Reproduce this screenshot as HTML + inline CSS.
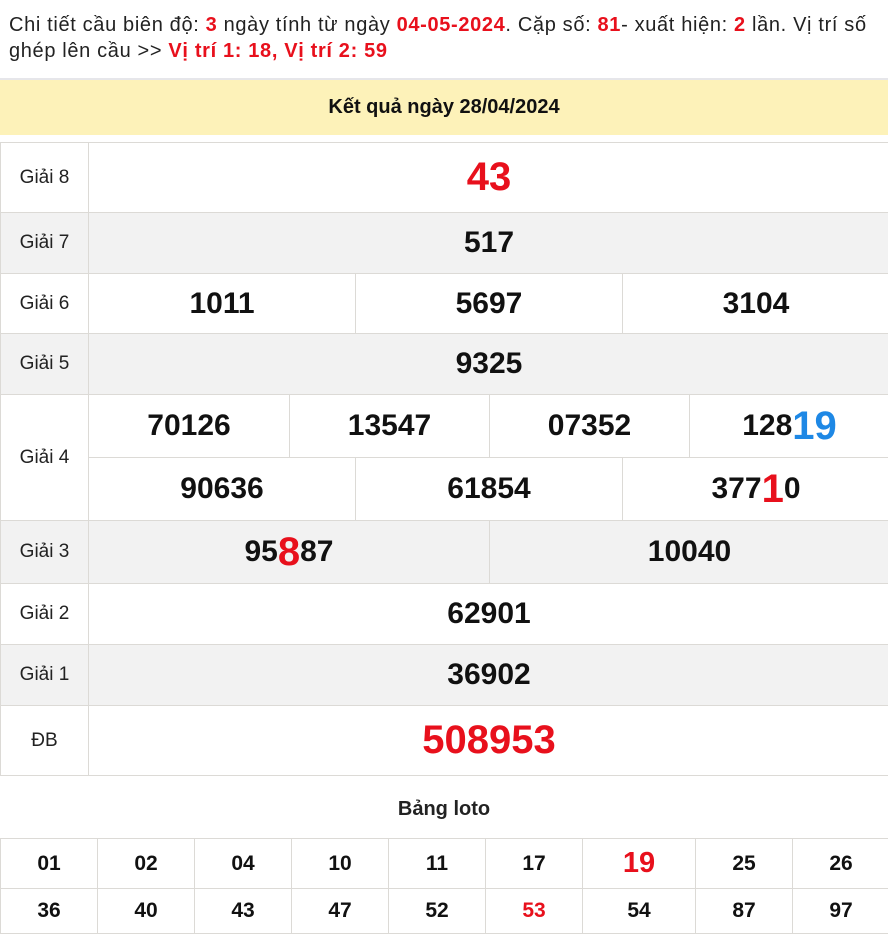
<!DOCTYPE html>
<html><head><meta charset="utf-8"><style>
*{margin:0;padding:0;box-sizing:border-box}
body{width:888px;height:935px;background:#fff;font-family:"Liberation Sans",Arial,sans-serif;position:relative;overflow:hidden;color:#111}
.top{position:absolute;left:9px;top:12px;width:880px;font-size:20px;letter-spacing:0.65px;line-height:26px;color:#222;white-space:nowrap}
.r{color:#e8101c;font-weight:bold}
.hd{position:absolute;left:0;top:78px;width:888px;height:57px;background:#fdf2b9;border-top:2px solid #e6e6ea;text-align:center;font-weight:bold;font-size:20px;line-height:55px}
.c{position:absolute;border:1px solid #dcdad6;display:flex;align-items:center;justify-content:center;font-weight:bold;font-size:30px}
.l{font-weight:normal;font-size:19px;color:#222}
.g{background:#f2f2f2}
.red{color:#e8101c}.blue{color:#1e88e5}
.big{font-size:40px}
.lt{position:absolute;border:1px solid #dcdad6;display:flex;align-items:center;justify-content:center;font-weight:bold;font-size:21px}
</style></head><body>
<div class="top">Chi tiết cầu biên độ: <span class="r">3</span> ngày tính từ ngày <span class="r">04-05-2024</span>. Cặp số: <span class="r">81</span>- xuất hiện: <span class="r">2</span> lần. Vị trí số<br>ghép lên cầu &gt;&gt; <span class="r">Vị trí 1: 18, Vị trí 2: 59</span></div>
<div class="hd">Kết quả ngày 28/04/2024</div>

<div class="c l" style="left:0;top:142px;width:89px;height:71px">Giải 8</div>
<div class="c red big" style="left:88px;top:142px;width:802px;height:71px">43</div>

<div class="c l g" style="left:0;top:212px;width:89px;height:62px">Giải 7</div>
<div class="c g" style="left:88px;top:212px;width:802px;height:62px">517</div>

<div class="c l" style="left:0;top:273px;width:89px;height:61px">Giải 6</div>
<div class="c" style="left:88px;top:273px;width:268px;height:61px">1011</div>
<div class="c" style="left:355px;top:273px;width:268px;height:61px">5697</div>
<div class="c" style="left:622px;top:273px;width:268px;height:61px">3104</div>

<div class="c l g" style="left:0;top:333px;width:89px;height:62px">Giải 5</div>
<div class="c g" style="left:88px;top:333px;width:802px;height:62px">9325</div>

<div class="c l" style="left:0;top:394px;width:89px;height:127px">Giải 4</div>
<div class="c" style="left:88px;top:394px;width:202px;height:64px">70126</div>
<div class="c" style="left:289px;top:394px;width:201px;height:64px">13547</div>
<div class="c" style="left:489px;top:394px;width:201px;height:64px">07352</div>
<div class="c" style="left:689px;top:394px;width:201px;height:64px">128<span class="blue big">19</span></div>
<div class="c" style="left:88px;top:457px;width:268px;height:64px">90636</div>
<div class="c" style="left:355px;top:457px;width:268px;height:64px">61854</div>
<div class="c" style="left:622px;top:457px;width:268px;height:64px">377<span class="red big">1</span>0</div>

<div class="c l g" style="left:0;top:520px;width:89px;height:64px">Giải 3</div>
<div class="c g" style="left:88px;top:520px;width:402px;height:64px">95<span class="red big">8</span>87</div>
<div class="c g" style="left:489px;top:520px;width:401px;height:64px">10040</div>

<div class="c l" style="left:0;top:583px;width:89px;height:62px">Giải 2</div>
<div class="c" style="left:88px;top:583px;width:802px;height:62px">62901</div>

<div class="c l g" style="left:0;top:644px;width:89px;height:62px">Giải 1</div>
<div class="c g" style="left:88px;top:644px;width:802px;height:62px">36902</div>

<div class="c l" style="left:0;top:705px;width:89px;height:71px">ĐB</div>
<div class="c red big" style="left:88px;top:705px;width:802px;height:71px">508953</div>

<div style="position:absolute;left:0;top:798px;width:888px;text-align:center;font-weight:bold;font-size:20px;color:#222">Bảng loto</div>

<div class="lt" style="left:0;top:838px;width:98px;height:51px">01</div>
<div class="lt" style="left:97px;top:838px;width:98px;height:51px">02</div>
<div class="lt" style="left:194px;top:838px;width:98px;height:51px">04</div>
<div class="lt" style="left:291px;top:838px;width:98px;height:51px">10</div>
<div class="lt" style="left:388px;top:838px;width:98px;height:51px">11</div>
<div class="lt" style="left:485px;top:838px;width:98px;height:51px">17</div>
<div class="lt red" style="left:582px;top:838px;width:114px;height:51px;font-size:29px">19</div>
<div class="lt" style="left:695px;top:838px;width:98px;height:51px">25</div>
<div class="lt" style="left:792px;top:838px;width:98px;height:51px">26</div>
<div class="lt" style="left:0;top:888px;width:98px;height:46px">36</div>
<div class="lt" style="left:97px;top:888px;width:98px;height:46px">40</div>
<div class="lt" style="left:194px;top:888px;width:98px;height:46px">43</div>
<div class="lt" style="left:291px;top:888px;width:98px;height:46px">47</div>
<div class="lt" style="left:388px;top:888px;width:98px;height:46px">52</div>
<div class="lt red" style="left:485px;top:888px;width:98px;height:46px">53</div>
<div class="lt" style="left:582px;top:888px;width:114px;height:46px">54</div>
<div class="lt" style="left:695px;top:888px;width:98px;height:46px">87</div>
<div class="lt" style="left:792px;top:888px;width:98px;height:46px">97</div>
</body></html>
